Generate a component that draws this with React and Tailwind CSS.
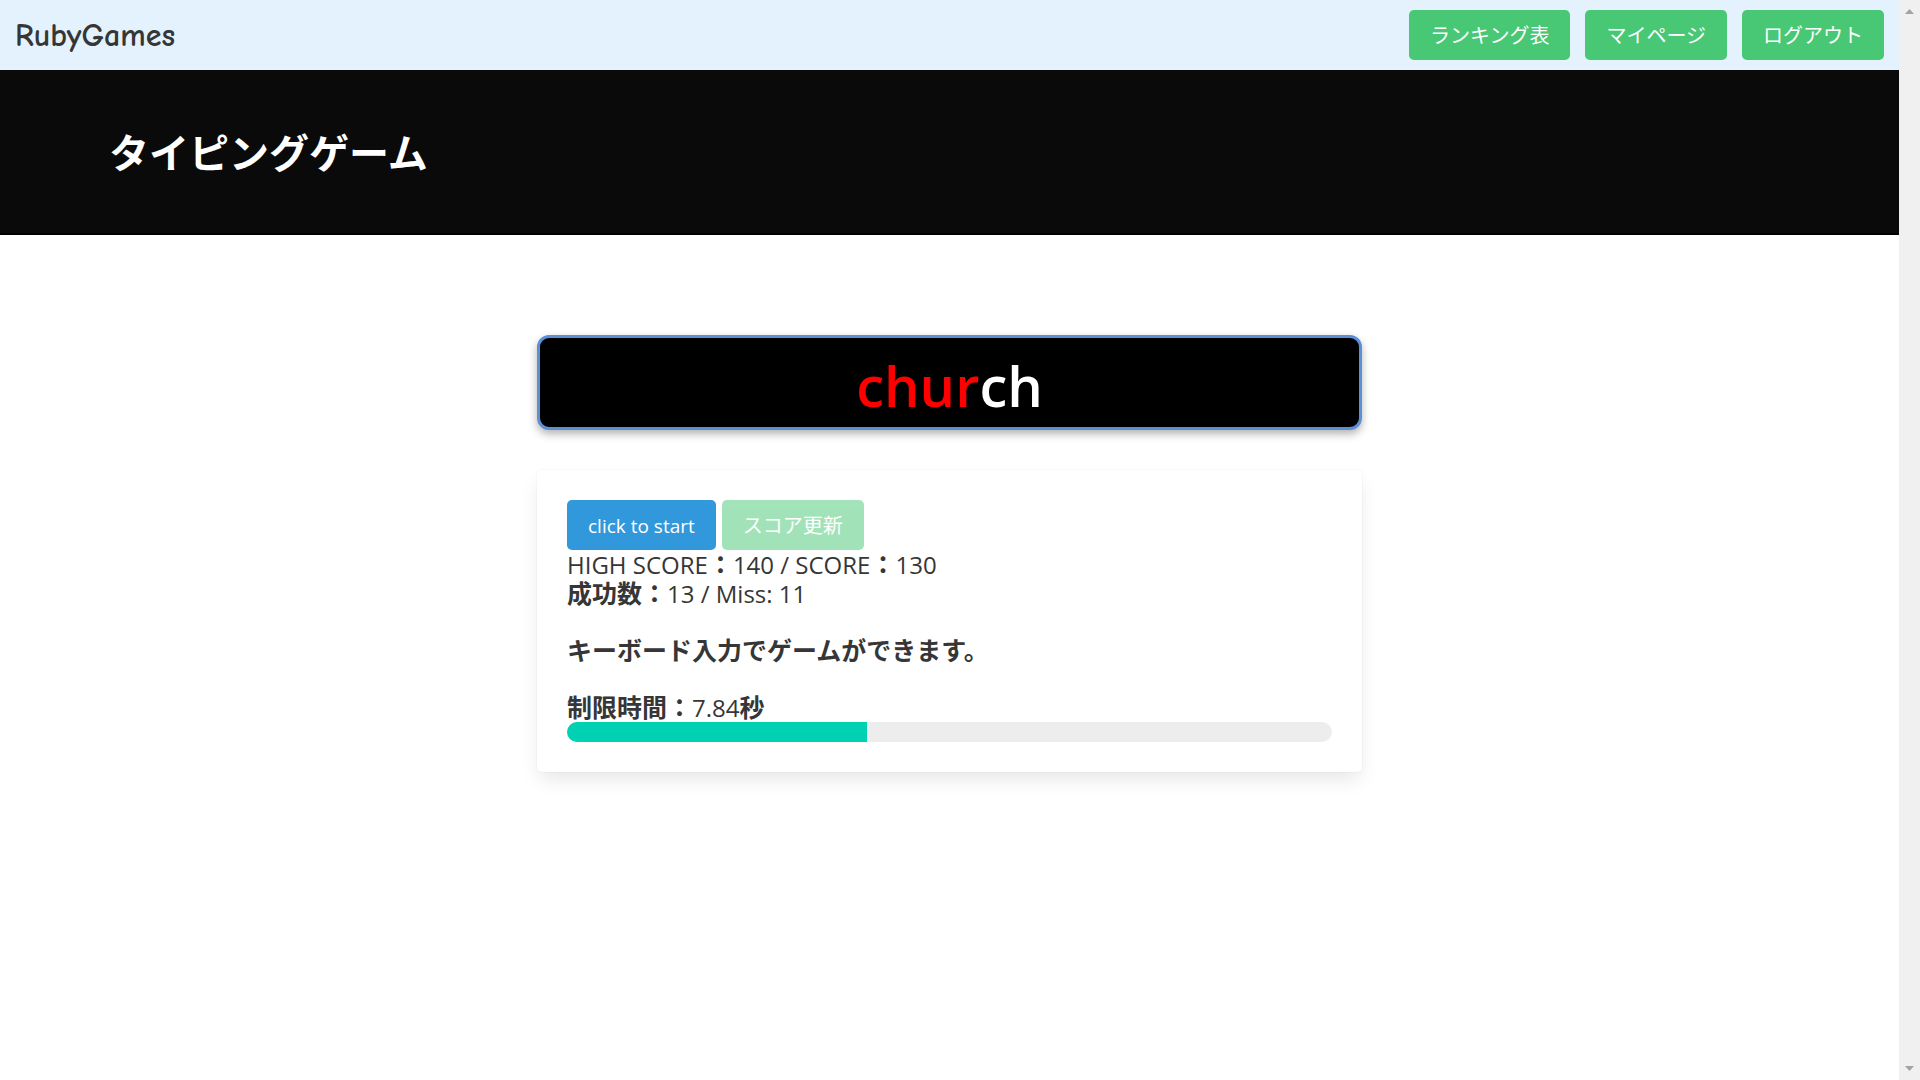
const TIME_LIMIT = 20;
const remaining = 7.84;

const navLinks = ["ランキング表", "マイページ", "ログアウト"];

function Latin({ children }) {
  return <span className="text-[24px] font-medium">{children}</span>;
}

function Navbar() {
  return (
    <nav className="flex h-[70px] items-center justify-between bg-[#e3f2fd] px-[15px]">
      <a
        href="#home"
        className="pt-[2px] font-['Comic_Sans_MS','Comic_Neue','Lato',sans-serif] text-[32px] font-bold leading-[48px] text-[#363636]"
      >
        RubyGames
      </a>
      <div className="flex gap-[15px]">
        {navLinks.map((label) => (
          <a
            key={label}
            href="#menu"
            className="flex h-[50px] items-center rounded-[5px] bg-[#48c774] px-[21px] pt-[2px] text-[20px] leading-[30px] text-white"
          >
            {label}
          </a>
        ))}
      </div>
    </nav>
  );
}

function Hero() {
  return (
    <header className="border-b-2 border-black bg-[#0a0a0a] px-[109px] pt-[60px] pb-[58px]">
      <h1 className="text-[40px] font-bold leading-[45px] text-white">タイピングゲーム</h1>
    </header>
  );
}

function WordPanel() {
  return (
    <div className="flex h-[95px] items-center justify-center rounded-[12px] border-[3px] border-[#5b8fd6] bg-black pt-1 text-[56px] font-semibold leading-[68px] text-white shadow-[0_4px_8px_rgba(0,0,0,0.3)]">
      <span className="text-[#ff0000]">chur</span>
      <span>ch</span>
    </div>
  );
}

function ScoreCard() {
  return (
    <section className="mt-10 rounded-[5px] bg-white p-[30px] shadow-[0_10px_20px_-3px_rgba(10,10,10,0.1),0_0_0_1px_rgba(10,10,10,0.02)]">
      <div className="flex gap-[6px]">
        <button
          type="button"
          className="h-[50px] rounded-[5px] bg-[#3298dc] px-[21px] pt-[2px] text-[19px] leading-[30px] text-white"
        >
          click to start
        </button>
        <button
          type="button"
          disabled
          className="h-[50px] rounded-[5px] bg-[#48c774] px-[21px] pt-[2px] text-[20px] leading-[30px] text-white opacity-50"
        >
          スコア更新
        </button>
      </div>
      <div className="text-[25px] font-bold leading-[29px] text-[#363636]">
        <p>
          <Latin>HIGH SCORE</Latin>：<Latin>140 / SCORE</Latin>：<Latin>130</Latin>
        </p>
        <p>
          成功数：<Latin>13 / Miss: 11</Latin>
        </p>
        <p className="my-[28px]">キーボード入力でゲームができます。</p>
        <p>
          制限時間：<Latin>{remaining}</Latin>秒
        </p>
      </div>
      <div
        role="progressbar"
        aria-label="制限時間"
        aria-valuemin={0}
        aria-valuemax={TIME_LIMIT}
        aria-valuenow={remaining}
        className="h-5 overflow-hidden rounded-full bg-[#ededed]"
      >
        <div className="h-full bg-[#00d1b2]" style={{ width: `${(remaining / TIME_LIMIT) * 100}%` }} />
      </div>
    </section>
  );
}

function ScrollTrack() {
  return (
    <div className="flex w-[21px] shrink-0 flex-col items-center justify-between bg-[#f0f0f0] py-[9px]" aria-hidden="true">
      <svg width="9" height="5" viewBox="0 0 9 5" fill="#a3a3a3">
        <path d="M0 5 4.5 0 9 5Z" />
      </svg>
      <svg width="9" height="5" viewBox="0 0 9 5" fill="#a3a3a3">
        <path d="M0 0 4.5 5 9 0Z" />
      </svg>
    </div>
  );
}

export default function App() {
  return (
    <div className="flex min-h-screen bg-white font-['Segoe_UI','Open_Sans','Noto_Sans_CJK_JP',sans-serif]" lang="ja">
      <div className="min-w-0 flex-1">
        <Navbar />
        <Hero />
        <main className="mx-auto max-w-[825px] pt-[100px]">
          <WordPanel />
          <ScoreCard />
        </main>
      </div>
      <ScrollTrack />
    </div>
  );
}
